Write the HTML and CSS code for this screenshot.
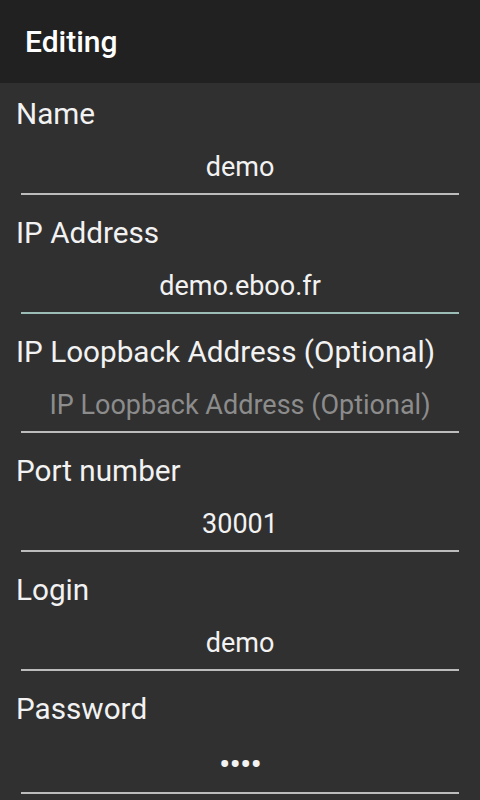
FILE: index.html
```html
<!DOCTYPE html>
<html>
<head>
<meta charset="utf-8">
<link rel="stylesheet" href="styles.css">
</head>
<body>
<header class="bar"><h1 class="title">Editing</h1></header>
<main class="form">
  <div class="field">
    <div class="label">Name</div>
    <div class="edit"><span class="value">demo</span></div>
  </div>
  <div class="field">
    <div class="label">IP Address</div>
    <div class="edit focused"><span class="value">demo.eboo.fr</span></div>
  </div>
  <div class="field">
    <div class="label">IP Loopback Address (Optional)</div>
    <div class="edit"><span class="value hint">IP Loopback Address (Optional)</span></div>
  </div>
  <div class="field">
    <div class="label">Port number</div>
    <div class="edit"><span class="value">30001</span></div>
  </div>
  <div class="field">
    <div class="label">Login</div>
    <div class="edit"><span class="value">demo</span></div>
  </div>
  <div class="field">
    <div class="label">Password</div>
    <div class="edit secret"><span class="value dots">••••</span></div>
  </div>
</main>
</body>
</html>
```
FILE: styles.css
```css
html, body {
  margin: 0;
  padding: 0;
  background: #303030;
  font-family: Roboto, "Noto Sans", sans-serif;
  color: #f2f2f2;
}
.bar {
  height: 83px;
  background: #212121;
  display: flex;
  align-items: center;
  padding: 0 25px;
}
.title {
  margin: 0;
  font-size: 30px;
  font-weight: 500;
  color: #ffffff;
  line-height: 34px;
}
.form {
  padding-top: 14px;
}
.field {
  display: flex;
  flex-direction: column;
  min-height: 119px;
}
.label {
  padding-left: 16px;
  font-size: 29.7px;
  line-height: 34px;
  white-space: nowrap;
}
.edit {
  margin: 21px 21px 0 21px;
  padding-bottom: 11px;
  border-bottom: 2px solid #bcbcbc;
  text-align: center;
}
.edit.focused {
  border-bottom-color: #9bbdb6;
}
.edit.secret {
  padding-bottom: 13px;
}
.value {
  display: block;
  font-size: 27px;
  line-height: 30px;
  white-space: nowrap;
}
.hint {
  color: #8c8c8c;
}
.dots {
  font-size: 34px;
  letter-spacing: -1px;
  padding-top: 2px;
}
```
